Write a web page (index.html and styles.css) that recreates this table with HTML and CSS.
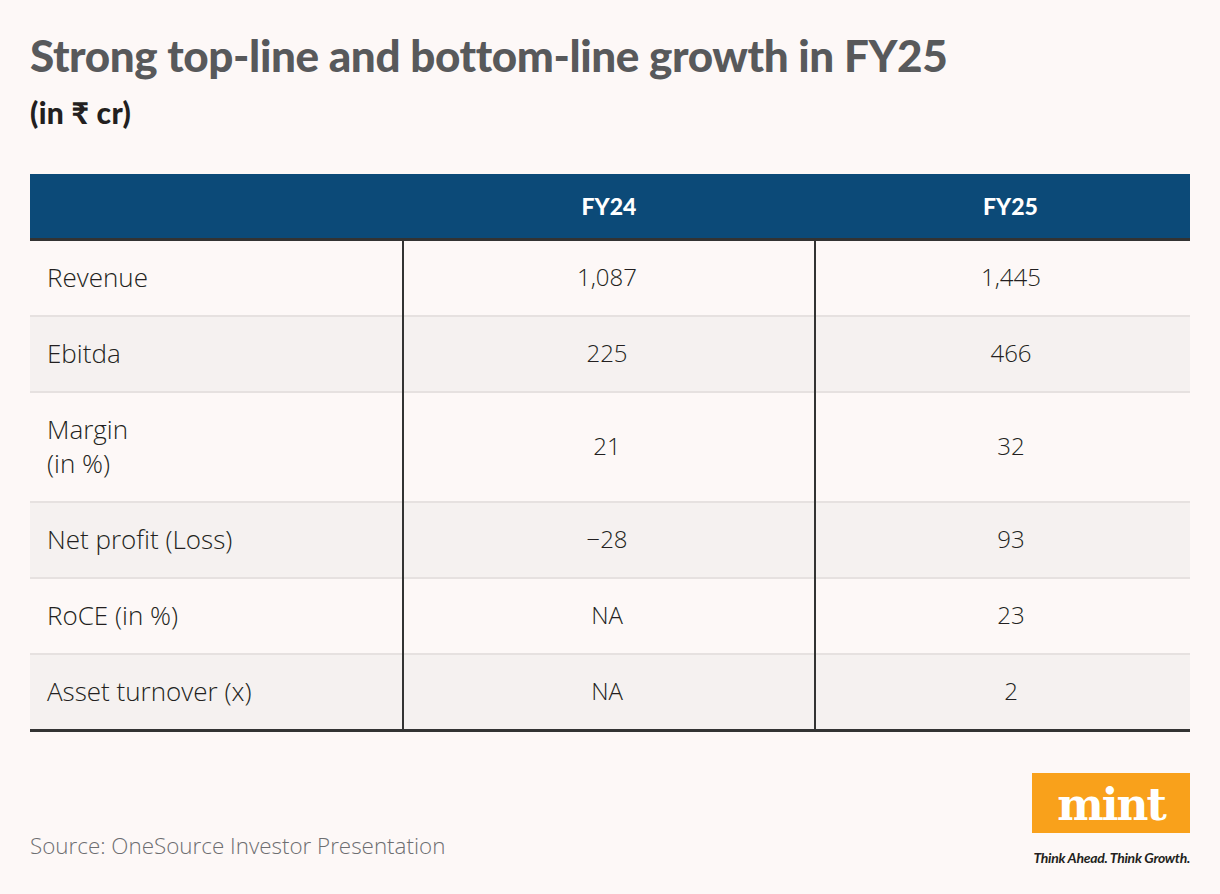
FILE: index.html
```html
<!DOCTYPE html>
<html lang="en">
<head>
<meta charset="utf-8">
<title>Strong top-line and bottom-line growth in FY25</title>
<link rel="stylesheet" href="styles.css">
</head>
<body>
<div class="page">
  <h1 class="title">Strong top-line and bottom-line growth in FY25</h1>
  <p class="subtitle">(in ₹ cr)</p>
  <table class="data">
    <thead>
      <tr>
        <th class="c1"></th>
        <th class="c2">FY24</th>
        <th class="c3">FY25</th>
      </tr>
    </thead>
    <tbody>
      <tr><td class="c1">Revenue</td><td class="c2">1,087</td><td class="c3">1,445</td></tr>
      <tr><td class="c1">Ebitda</td><td class="c2">225</td><td class="c3">466</td></tr>
      <tr><td class="c1">Margin<br>(in %)</td><td class="c2">21</td><td class="c3">32</td></tr>
      <tr><td class="c1">Net profit (Loss)</td><td class="c2">−28</td><td class="c3">93</td></tr>
      <tr><td class="c1">RoCE (in %)</td><td class="c2">NA</td><td class="c3">23</td></tr>
      <tr><td class="c1">Asset turnover (x)</td><td class="c2">NA</td><td class="c3">2</td></tr>
    </tbody>
  </table>
  <div class="footer">
    <p class="source">Source: OneSource Investor Presentation</p>
    <div class="brand">
      <div class="logo">mint</div>
      <div class="tagline">Think Ahead. Think Growth.</div>
    </div>
  </div>
</div>
</body>
</html>
```
FILE: styles.css
```css
html, body {
  margin: 0;
  padding: 0;
  background: #fdf8f7;
}
.page {
  width: 1220px;
  height: 894px;
  box-sizing: border-box;
  padding: 26px 30px 0 30px;
  font-family: "Open Sans", Lato, sans-serif;
  color: #231f20;
}
.title {
  margin: 0;
  font-family: Lato, "Noto Sans", sans-serif;
  font-size: 44px;
  font-weight: 900;
  color: #58595b;
  line-height: 58px;
  letter-spacing: -0.4px;
}
.subtitle {
  margin: 10px 0 0 0;
  font-family: Lato, "Noto Sans", sans-serif;
  font-size: 30px;
  font-weight: 900;
  line-height: 36px;
  letter-spacing: 0.3px;
  color: #231f20;
}
.data {
  margin-top: 44px;
  width: 1160px;
  border-collapse: collapse;
  table-layout: fixed;
}
.data th {
  background: #0c4a78;
  color: #ffffff;
  font-family: Lato, "Noto Sans", sans-serif;
  font-weight: 900;
  font-size: 23px;
  height: 64px;
  padding: 0;
  text-align: center;
  border-bottom: 3px solid #333333;
}
.data th.c1 { width: 373px; }
.data th.c2 { width: 412px; }
.data td {
  font-size: 24px;
  font-weight: 300;
  line-height: 34px;
  padding: 19px 0 21px 0;
  text-align: center;
  border-top: 2px solid #e6e1e0;
}
.data tbody tr:first-child td { border-top: none; }
.data tbody tr:nth-child(even) td { background: #f5f1f0; }
.data tbody tr:last-child td { border-bottom: 3px solid #333333; }
.data td.c1 {
  text-align: left;
  padding-left: 17px;
  font-size: 26px;
  border-right: 2px solid #333333;
}
.data td.c2 {
  border-right: 2px solid #333333;
  padding-right: 4px;
}
.data .c3 { padding-left: 16px; }
.footer {
  margin-top: 41px;
  display: flex;
  justify-content: space-between;
  align-items: flex-end;
}
.source {
  margin: 0 0 6px 0;
  font-size: 22.4px;
  font-weight: 300;
  line-height: 29px;
  color: #6d6e71;
}
.brand {
  display: flex;
  flex-direction: column;
  align-items: flex-end;
}
.logo {
  width: 158px;
  height: 60px;
  box-sizing: border-box;
  padding-top: 4px;
  background: #f9a11b;
  color: #ffffff;
  font-family: "DejaVu Serif", "Liberation Serif", serif;
  font-weight: 700;
  font-size: 44px;
  line-height: 56px;
  text-align: center;
  letter-spacing: -2px;
}
.tagline {
  margin-top: 16px;
  font-family: Lato, "Noto Sans", sans-serif;
  font-size: 14px;
  line-height: 17px;
  font-style: italic;
  font-weight: 700;
  color: #231f20;
  letter-spacing: -0.3px;
  white-space: nowrap;
}
```
